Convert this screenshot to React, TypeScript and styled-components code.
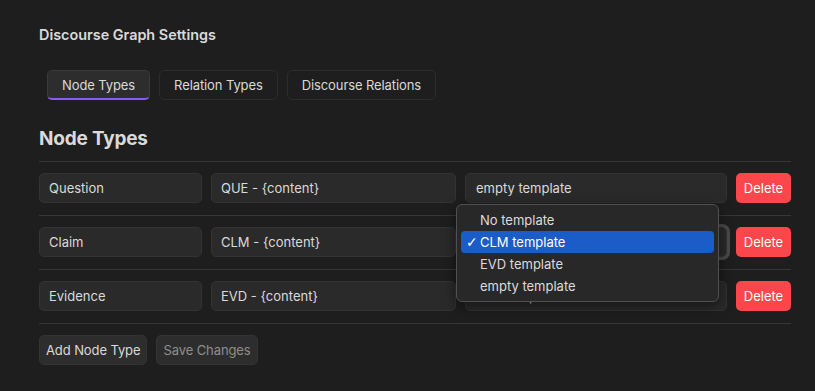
import React, { FC } from "react";
import styled, { createGlobalStyle, css } from "styled-components";

const GlobalStyle = createGlobalStyle`
  html, body {
    margin: 0;
    padding: 0;
    background: #1e1e1e;
    font-family: Inter, "Noto Sans", "Liberation Sans", sans-serif;
    color: #dadada;
  }
`;

type NodeType = { name: string; format: string; template: string };

const nodeTypes: NodeType[] = [
  { name: "Question", format: "QUE - {content}", template: "empty template" },
  { name: "Claim", format: "CLM - {content}", template: "CLM template" },
  { name: "Evidence", format: "EVD - {content}", template: "EVD template" },
];

const templates = ["No template", "CLM template", "EVD template", "empty template"];

const App: FC = () => (
  <Page>
    <GlobalStyle />
    <Title>Discourse Graph Settings</Title>
    <Tabs>
      <Tab active>Node Types</Tab>
      <Tab>Relation Types</Tab>
      <Tab>Discourse Relations</Tab>
    </Tabs>
    <Heading>Node Types</Heading>
    <List>
      {nodeTypes.map((n, i) => (
        <Row key={n.name}>
          <Input value={n.name} readOnly />
          <Input value={n.format} readOnly />
          <SelectWrap>
            <Select focused={i === 1}>{n.template}</Select>
            {i === 1 && (
              <Menu>
                {templates.map((t) => (
                  <MenuItem key={t} selected={t === n.template}>
                    <Check>{t === n.template ? "✓" : ""}</Check>
                    {t}
                  </MenuItem>
                ))}
              </Menu>
            )}
          </SelectWrap>
          <DeleteButton>Delete</DeleteButton>
        </Row>
      ))}
    </List>
    <Actions>
      <Button>Add Node Type</Button>
      <Button disabled>Save Changes</Button>
    </Actions>
  </Page>
);

export default App;

const Page = styled.div`
  padding: 26px 24px 0 39px;
`;

const Title = styled.div`
  font-size: 14.4px;
  font-weight: 600;
  line-height: 18px;
`;

const Tabs = styled.div`
  display: flex;
  gap: 9px;
  margin: 26px 0 0 8px;
`;

const Tab = styled.button<{ active?: boolean }>`
  height: 30px;
  padding: 0 14px;
  border-radius: 5px;
  border: 1px solid #2c2c2c;
  background: #1e1e1e;
  color: #dadada;
  font-family: inherit;
  font-size: 13px;
  letter-spacing: -0.1px;
  ${(p) =>
    p.active &&
    css`
      background: #2d2d2d;
      border-color: #3a3a3a;
      border-bottom: 2px solid #8a5cf5;
    `}
`;

const Heading = styled.h2`
  margin: 26px 0 0;
  font-size: 19px;
  font-weight: 700;
  letter-spacing: -0.2px;
  line-height: 26px;
`;

const List = styled.div`
  margin-top: 9px;
`;

const Row = styled.div`
  display: grid;
  grid-template-columns: 163px 245px 1fr 55px;
  gap: 9px;
  padding: 11px 0 12px;
  border-top: 1px solid #363636;
  &:last-child {
    border-bottom: 1px solid #363636;
  }
`;

const field = css`
  box-sizing: border-box;
  height: 30px;
  padding: 0 9px;
  border: 1px solid #333;
  border-radius: 5px;
  background: #2a2a2a;
  color: #dadada;
  font-family: inherit;
  font-size: 13px;
`;

const Input = styled.input`
  ${field}
  min-width: 0;
  outline: none;
`;

const SelectWrap = styled.div`
  position: relative;
`;

const Select = styled.div<{ focused?: boolean }>`
  ${field}
  display: flex;
  align-items: center;
  padding-left: 10px;
  ${(p) =>
    p.focused &&
    css`
      box-shadow: 0 0 0 3px #4a4a4a;
    `}
`;

const Menu = styled.div`
  position: absolute;
  left: -9px;
  top: -23px;
  width: 263px;
  box-sizing: border-box;
  padding: 4px 4px;
  background: #282828;
  border: 1px solid #505050;
  border-radius: 6px;
  box-shadow: 0 4px 14px rgba(0, 0, 0, 0.5);
  z-index: 2;
`;

const MenuItem = styled.div<{ selected?: boolean }>`
  display: flex;
  align-items: center;
  height: 22px;
  padding: 0 5px;
  border-radius: 4px;
  font-size: 13px;
  color: #dcdcdc;
  ${(p) =>
    p.selected &&
    css`
      background: #1a5cc8;
      color: #fff;
    `}
`;

const Check = styled.span`
  width: 14px;
  font-size: 14px;
  font-weight: 700;
  font-family: "DejaVu Sans", sans-serif;
`;

const DeleteButton = styled.button`
  height: 30px;
  border: none;
  border-radius: 5px;
  background: #fb464c;
  color: #fff;
  font-family: inherit;
  font-size: 13px;
  padding: 0;
`;

const Actions = styled.div`
  display: flex;
  gap: 9px;
  margin-top: 11px;
`;

const Button = styled.button`
  height: 30px;
  padding: 0 6px;
  border: 1px solid #333;
  border-radius: 5px;
  background: #2d2d2d;
  color: #dadada;
  font-family: inherit;
  font-size: 13px;
  letter-spacing: -0.1px;
  &:disabled {
    color: #8e8e8e;
  }
`;
